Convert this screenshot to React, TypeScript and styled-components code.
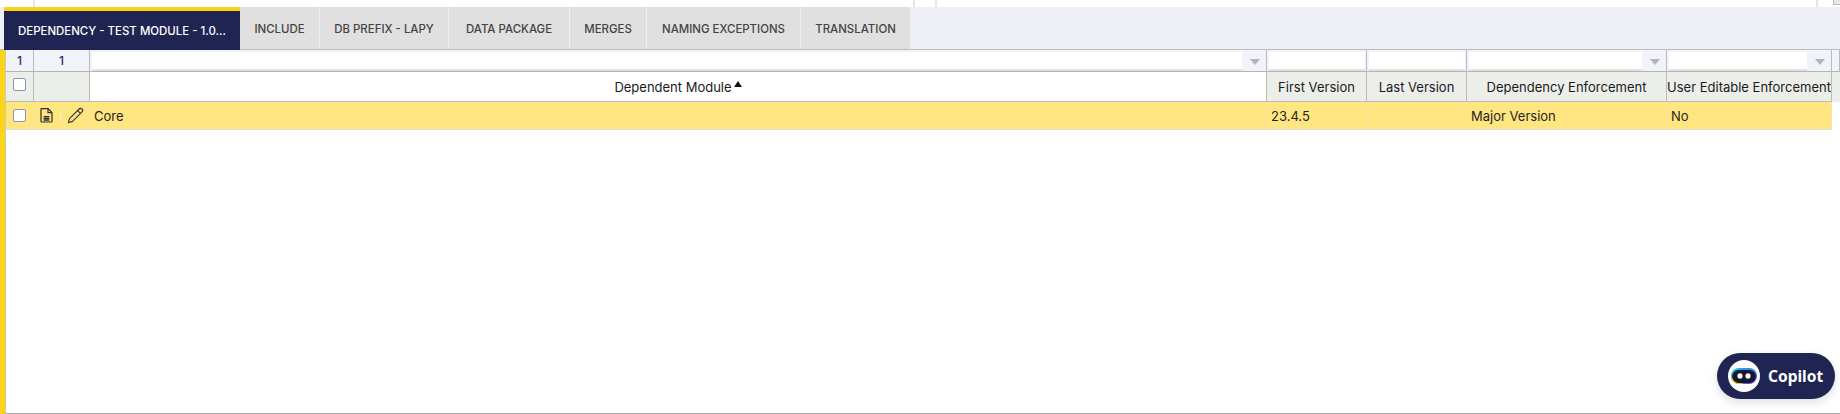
import React from "react";
import styled, { createGlobalStyle } from "styled-components";
import { Pencil } from "lucide-react";

const Global = createGlobalStyle`
  html, body { margin: 0; padding: 0; background: #fff; overflow: hidden; }
  * { box-sizing: border-box; }
  body { font-family: Inter, "Liberation Sans", sans-serif; }
`;

const Page = styled.div`
  position: relative;
  width: 1840px;
  height: 414px;
  display: flex;
  flex-direction: column;
  overflow: hidden;
  background: #fff;
`;

const TopStrip = styled.div`
  height: 7px;
  display: grid;
  grid-template-columns: 33px 880px 22px 881px 17px 1fr;
`;

const StripCell = styled.div<{ $line?: boolean }>`
  border-left: ${(p) => (p.$line ? "2px solid #e6e6ea" : "none")};
`;

const StripBox = styled.div`
  height: 5px;
  border-left: 1px solid #bbb;
  border-bottom: 1px solid #bbb;
  background: #e8e8e8;
`;

const TabBar = styled.div`
  height: 43px;
  display: flex;
  align-items: flex-start;
  background: #eef0f6;
  padding-left: 4px;
  border-bottom: 1px solid #bdbdbd;
`;

const Tab = styled.div<{ $w: number; $active?: boolean }>`
  width: ${(p) => p.$w}px;
  height: ${(p) => (p.$active ? 43 : 42)}px;
  margin-right: ${(p) => (p.$active ? 0 : 1)}px;
  display: flex;
  align-items: center;
  justify-content: center;
  font-size: 11.45px;
  font-weight: 500;
  white-space: nowrap;
  color: ${(p) => (p.$active ? "#fff" : "#444")};
  background: ${(p) => (p.$active ? "#202452" : "#e0e0e0")};
  border-top: ${(p) => (p.$active ? "4px solid #fdd20e" : "none")};
  padding-top: ${(p) => (p.$active ? 0 : 1)}px;
`;

const Body = styled.div`
  flex: 1;
  display: flex;
  min-height: 0;
`;

const Accent = styled.div`
  width: 5px;
  background: #fdd514;
`;

const Grid = styled.div`
  flex: 1;
  border-left: 1px solid #c8c8c8;
  border-bottom: 1px solid #a8a8a8;
  display: grid;
  grid-template-columns: 28px 56px 1177px 100px 100px 200px 165px 1fr;
  grid-template-rows: 22px 30px 28px 1fr;
  align-content: start;
`;

const FilterCell = styled.div<{ $count?: boolean }>`
  display: flex;
  align-items: center;
  justify-content: center;
  background: #f0f3f9;
  border-right: 1px solid #bbb;
  border-bottom: 1px solid #b4b4b4;
  font-size: 12px;
  font-weight: 500;
  color: #2a2d52;
  padding: ${(p) => (p.$count ? "0" : "2px 1px 0 2px")};
`;

const FilterInput = styled.div`
  flex: 1;
  height: 100%;
  background: #fff;
  border-bottom: 2px solid #e2e2e2;
`;

const FilterArrow = styled.div`
  width: 21px;
  margin-left: 2px;
  display: flex;
  align-items: center;
  justify-content: center;
  &::after {
    content: "";
    border-left: 5px solid transparent;
    border-right: 5px solid transparent;
    border-top: 6px solid #b5b5b5;
  }
`;

const HeaderCell = styled.div<{ $sorted?: boolean; $bare?: boolean }>`
  display: flex;
  align-items: center;
  justify-content: center;
  gap: 2px;
  font-size: 13px;
  font-weight: 400;
  color: #1a1a1c;
  white-space: nowrap;
  overflow: hidden;
  background: ${(p) => (p.$sorted ? "#fff" : "#ebeee9")};
  border-right: ${(p) => (p.$bare ? "none" : "1px solid #bbb")};
  border-bottom: ${(p) => (p.$bare ? "none" : "1px solid #bbb")};
`;

const SortMark = styled.svg`
  width: 8px;
  height: 6px;
  margin-top: -5px;
`;

const Cell = styled.div<{ $center?: boolean }>`
  display: flex;
  align-items: center;
  justify-content: ${(p) => (p.$center ? "center" : "flex-start")};
  padding-left: ${(p) => (p.$center ? 0 : 4)}px;
  background: #ffe680;
  border-right: 1px solid #f5e7a8;
  border-bottom: 1px solid #dcdcdc;
  font-size: 13px;
  color: #1f1f1f;
  white-space: nowrap;
`;

const ActionCell = styled(Cell)`
  justify-content: flex-start;
  padding-left: 6px;
`;

const Check = styled.input.attrs({ type: "checkbox" })<{ $raised?: boolean }>`
  appearance: none;
  width: 13px;
  height: 13px;
  margin: 0 0 ${(p) => (p.$raised ? 5 : 0)}px -1px;
  background: #fff;
  border: 1px solid #8e92bd;
  border-radius: 2px;
`;

const ActionDivider = styled.span`
  width: 1px;
  height: 12px;
  margin: 0 6px 0 7px;
  background: #f3f0dd;
`;

const Empty = styled.div`
  grid-column: 1 / -1;
`;

const CopilotButton = styled.div`
  position: absolute;
  left: 1717px;
  top: 353px;
  width: 118px;
  height: 46px;
  display: flex;
  align-items: center;
  gap: 8px;
  padding-left: 11px;
  border-radius: 23px;
  background: #202452;
  box-shadow: 0 3px 8px rgba(32, 36, 82, 0.16);
  color: #fff;
  font-family: "Noto Sans", sans-serif;
  font-size: 15.5px;
  font-weight: 700;
`;

const Avatar = styled.span`
  width: 32px;
  height: 32px;
  border-radius: 50%;
  background: #fff;
  display: flex;
  align-items: center;
  justify-content: center;
`;

const FileIcon = () => (
  <svg width="13" height="15" viewBox="0 0 13 15" fill="none" stroke="#2f2f2f" strokeWidth="1.2">
    <path d="M1 1.2c0-.3.2-.6.6-.6H8l4 4v8.6c0 .5-.3.8-.8.8H1.8c-.5 0-.8-.3-.8-.8z" />
    <path d="M8 .8v3.8h4" />
    <path d="M3.6 8.600h5.800M3.600 10.300h5.800M3.600 12h5.800" strokeWidth="1.3" />
  </svg>
);

const RobotIcon = () => (
  <svg width="32" height="32" viewBox="0 0 32 32">
    <defs>
      <linearGradient id="rim" x1="0" y1="0" x2="1" y2="1">
        <stop offset="0" stopColor="#18c8f0" />
        <stop offset="0.55" stopColor="#2f6df0" />
        <stop offset="1" stopColor="#7a3cf0" />
      </linearGradient>
    </defs>
    <rect x="3" y="8" width="26" height="16" rx="8" fill="url(#rim)" />
    <path d="M3 16c0 4.800 3.200 8 7.800 8h6.200c-5-.6-11-2.500-14-8z" fill="#f6d21a" />
    <rect x="4.200" y="10" width="23.600" height="13" rx="6.500" fill="#15182c" />
    <ellipse cx="12" cy="16" rx="2.600" ry="2.800" fill="#fff" />
    <ellipse cx="20" cy="16" rx="2.600" ry="2.800" fill="#fff" />
  </svg>
);

const tabs = [
  { label: "DEPENDENCY - TEST MODULE - 1.0...", w: 236, active: true },
  { label: "INCLUDE", w: 79 },
  { label: "DB PREFIX - LAPY", w: 128 },
  { label: "DATA PACKAGE", w: 120 },
  { label: "MERGES", w: 76 },
  { label: "NAMING EXCEPTIONS", w: 153 },
  { label: "TRANSLATION", w: 109 },
];

export default function App() {
  return (
    <Page>
      <Global />
      <TopStrip>
        <StripCell />
        <StripCell $line />
        <StripCell $line />
        <StripCell $line />
        <StripCell $line />
        <StripBox />
      </TopStrip>
      <TabBar>
        {tabs.map((t) => (
          <Tab key={t.label} $w={t.w} $active={t.active}>
            {t.label}
          </Tab>
        ))}
      </TabBar>
      <Body>
        <Accent />
        <Grid>
          <FilterCell $count>1</FilterCell>
          <FilterCell $count>1</FilterCell>
          <FilterCell>
            <FilterInput />
            <FilterArrow />
          </FilterCell>
          <FilterCell>
            <FilterInput />
          </FilterCell>
          <FilterCell>
            <FilterInput />
          </FilterCell>
          <FilterCell>
            <FilterInput />
            <FilterArrow />
          </FilterCell>
          <FilterCell>
            <FilterInput />
            <FilterArrow />
          </FilterCell>
          <FilterCell $count />

          <HeaderCell>
            <Check $raised />
          </HeaderCell>
          <HeaderCell />
          <HeaderCell $sorted>
            Dependent Module
            <SortMark viewBox="0 0 8 6">
              <path d="M4 0l4 6H0z" fill="#111" />
            </SortMark>
          </HeaderCell>
          <HeaderCell>First Version</HeaderCell>
          <HeaderCell>Last Version</HeaderCell>
          <HeaderCell>Dependency Enforcement</HeaderCell>
          <HeaderCell>User Editable Enforcement</HeaderCell>
          <HeaderCell $bare />

          <Cell $center>
            <Check />
          </Cell>
          <ActionCell>
            <FileIcon />
            <ActionDivider />
            <Pencil size={17} strokeWidth={1.6} color="#333" />
          </ActionCell>
          <Cell>Core</Cell>
          <Cell>23.4.5</Cell>
          <Cell />
          <Cell>Major Version</Cell>
          <Cell>No</Cell>
          <div />
          <Empty />
        </Grid>
      </Body>
      <CopilotButton>
        <Avatar>
          <RobotIcon />
        </Avatar>
        Copilot
      </CopilotButton>
    </Page>
  );
}
